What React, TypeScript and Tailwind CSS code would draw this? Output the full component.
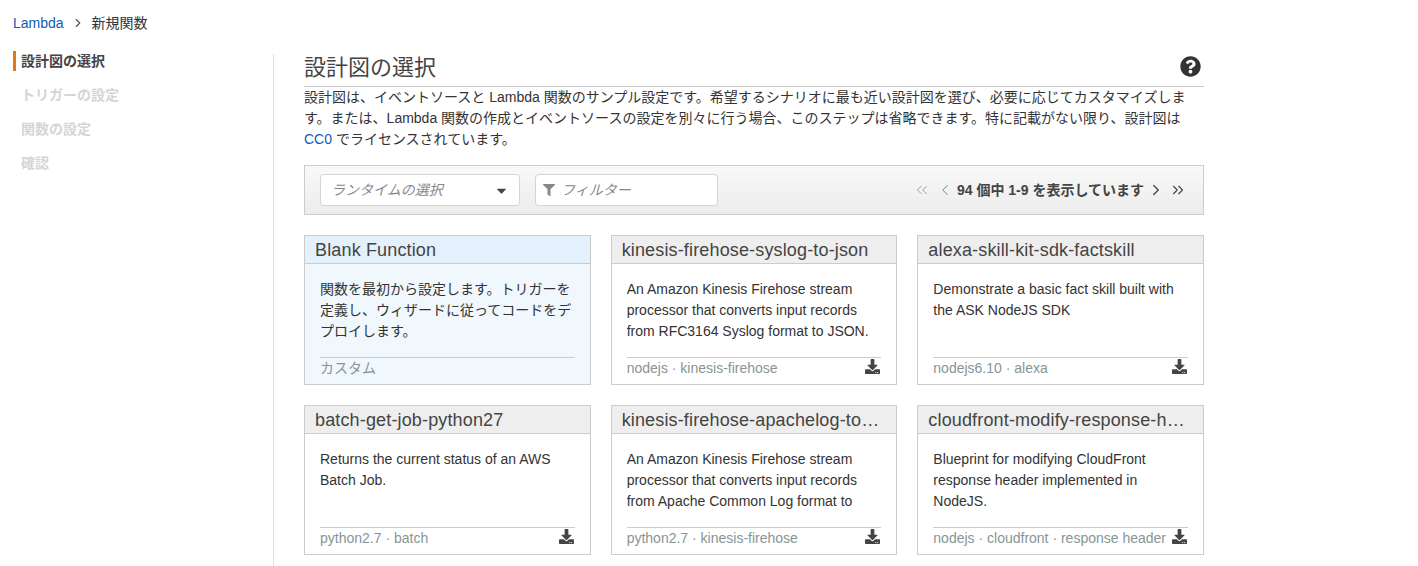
import { ChevronLeft, ChevronRight, ChevronsLeft, ChevronsRight } from 'lucide-react'
import { FaCaretDown, FaDownload, FaFilter, FaQuestionCircle } from 'react-icons/fa'

const fontStack = '[font-family:"Liberation_Sans","Noto_Sans_CJK_JP",sans-serif]'

const steps = [
  { label: '設計図の選択', active: true },
  { label: 'トリガーの設定', active: false },
  { label: '関数の設定', active: false },
  { label: '確認', active: false },
]

const cards = [
  {
    title: 'Blank Function',
    body: '関数を最初から設定します。トリガーを定義し、ウィザードに従ってコードをデプロイします。',
    meta: 'カスタム',
    selected: true,
  },
  {
    title: 'kinesis-firehose-syslog-to-json',
    body: 'An Amazon Kinesis Firehose stream processor that converts input records from RFC3164 Syslog format to JSON.',
    meta: 'nodejs · kinesis-firehose',
  },
  {
    title: 'alexa-skill-kit-sdk-factskill',
    body: 'Demonstrate a basic fact skill built with the ASK NodeJS SDK',
    meta: 'nodejs6.10 · alexa',
  },
  {
    title: 'batch-get-job-python27',
    body: 'Returns the current status of an AWS Batch Job.',
    meta: 'python2.7 · batch',
  },
  {
    title: 'kinesis-firehose-apachelog-to-json',
    body: 'An Amazon Kinesis Firehose stream processor that converts input records from Apache Common Log format to JSON.',
    meta: 'python2.7 · kinesis-firehose',
  },
  {
    title: 'cloudfront-modify-response-header',
    body: 'Blueprint for modifying CloudFront response header implemented in NodeJS.',
    meta: 'nodejs · cloudfront · response header',
  },
]

type CardProps = {
  title: string
  body: string
  meta: string
  selected?: boolean
}

function BlueprintCard({ title, body, meta, selected }: CardProps) {
  return (
    <div
      className={`h-[150px] border border-[#cccccc] flex flex-col ${
        selected ? 'bg-[#f0f7fd]' : 'bg-white'
      }`}
    >
      <div
        className={`h-[28px] shrink-0 border-b border-[#cccccc] pl-[10px] pr-[15px] text-[18px] leading-[28px] tracking-[0.15px] text-[#444444] truncate ${
          selected ? 'bg-[#e4f1fc]' : 'bg-[#eeeeee]'
        }`}
      >
        {title}
      </div>
      <div className="flex-1 flex flex-col px-[15px] pt-[15px] min-h-0">
        <p className="h-[63px] overflow-hidden text-[14px] leading-[21px] text-[#333333]">{body}</p>
        <div className="mt-[15px] border-t border-[#cccccc] flex items-start justify-between h-[26px] text-[14px] leading-[20px] text-[#879596]">
          <span>{meta}</span>
          {!selected && <FaDownload className="text-[15px] text-[#444444] mr-[1px] mt-[1px]" />}
        </div>
      </div>
    </div>
  )
}

export default function App() {
  return (
    <div className={`h-[566px] w-[1418px] overflow-hidden bg-white ${fontStack}`}>
      {/* Breadcrumb */}
      <div className="flex items-center h-[46px] pl-[13px] text-[14px] text-[#333333]">
        <span className="text-[#0f5bb5]">Lambda</span>
        <ChevronRight className="w-[14px] h-[14px] mx-[7px] text-[#555555]" />
        <span>新規関数</span>
      </div>

      <div className="flex">
        {/* Steps */}
        <nav className="w-[260px] ml-[13px] mt-[5px] shrink-0">
          {steps.map((step) => (
            <div
              key={step.label}
              className={`h-[20px] mb-[14px] pl-[5px] border-l-[3px] text-[14px] leading-[20px] font-bold ${
                step.active ? 'border-[#e47911] text-[#444444]' : 'border-transparent text-[#d5d5d5]'
              }`}
            >
              {step.label}
            </div>
          ))}
        </nav>

        <main className="border-l border-[#dddddd] pl-[30px] mt-[8px] h-[520px] w-[931px] shrink-0">
          {/* Heading */}
          <div className="flex items-center justify-between h-[33px] border-b border-[#cccccc]">
            <h1 className="text-[22px] leading-[28px] mt-[-4px] text-[#444444]">設計図の選択</h1>
            <FaQuestionCircle className="text-[21px] text-[#333333] mr-[3px] mt-[-7px]" />
          </div>
          <p className="text-[14px] leading-[21px] text-[#333333]">
            設計図は、イベントソースと Lambda 関数のサンプル設定です。希望するシナリオに最も近い設計図を選び、必要に応じてカスタマイズします。または、Lambda 関数の作成とイベントソースの設定を別々に行う場合、このステップは省略できます。特に記載がない限り、設計図は <span className="text-[#0f5bb5]">CC0</span> でライセンスされています。
          </p>

          {/* Toolbar */}
          <div className="mt-[15px] h-[50px] border border-[#cccccc] bg-gradient-to-b from-[#f9f9f9] to-[#ececec] flex items-center pl-[15px] pr-[16px]">
            <div className="w-[200px] h-[32px] rounded-[4px] border border-[#d5d5d5] bg-white flex items-center justify-between pl-[10px] pr-[10px] text-[14px] italic text-[#888888]">
              <span>ランタイムの選択</span>
              <FaCaretDown className="text-[15px] text-[#444444]" />
            </div>
            <div className="ml-[15px] w-[183px] h-[32px] rounded-[4px] border border-[#d5d5d5] bg-white flex items-center pl-[7px] text-[14px] italic text-[#888888]">
              <FaFilter className="text-[12px] text-[#888888] mr-[6px]" />
              <span>フィルター</span>
            </div>
            <div className="ml-auto flex items-center text-[14px] font-bold text-[#444444]">
              <ChevronsLeft className="w-[18px] h-[18px] text-[#999999] mr-[5px]" strokeWidth={1.25} />
              <ChevronLeft className="w-[18px] h-[18px] text-[#777777]" strokeWidth={1.25} />
              <span className="mx-[3px]">94 個中 1-9 を表示しています</span>
              <ChevronRight className="w-[18px] h-[18px] text-[#444444] mr-[4px]" strokeWidth={1.75} />
              <ChevronsRight className="w-[18px] h-[18px] text-[#444444]" strokeWidth={1.5} />
            </div>
          </div>

          {/* Blueprints */}
          <div className="mt-[20px] grid grid-cols-3 gap-x-[20px] gap-y-[20px] w-[900px]">
            {cards.map((card) => (
              <BlueprintCard key={card.title} {...card} />
            ))}
          </div>
        </main>
      </div>
    </div>
  )
}
